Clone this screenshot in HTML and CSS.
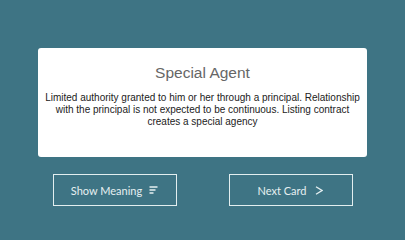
FILE: index.html
```html
<!DOCTYPE html>
<html>
<head>
<meta charset="utf-8">
<link rel="stylesheet" href="styles.css">
</head>
<body>
<div class="page">
  <div class="card">
    <h1 class="title">Special Agent</h1>
    <p class="meaning">Limited authority granted to him or her through a principal. Relationship with the principal is not expected to be continuous. Listing contract creates a special agency</p>
  </div>
  <div class="actions">
    <button class="btn btn-meaning">Show Meaning
      <svg class="icon" width="9" height="8" viewBox="0 0 9 8"><path d="M0.5 1h8M0.5 4h6M0.5 7h4" stroke="#e6f0f1" stroke-width="1.3" fill="none"/></svg>
    </button>
    <button class="btn btn-next">Next Card
      <svg class="icon" width="8" height="9" viewBox="0 0 8 9"><path d="M1 0.8L7 4.5L1 8.2" stroke="#e6f0f1" stroke-width="1.3" fill="none"/></svg>
    </button>
  </div>
</div>
</body>
</html>
```
FILE: styles.css
```css
html, body {
  margin: 0;
  padding: 0;
  background: #3e7484;
}
.page {
  width: 405px;
  height: 228px;
  box-sizing: border-box;
  padding-top: 48px;
  display: flex;
  flex-direction: column;
  align-items: center;
}
.card {
  width: 329px;
  height: 109px;
  box-sizing: border-box;
  background: #ffffff;
  border-radius: 3px;
  padding: 16px 2px 0;
  text-align: center;
}
.title {
  margin: 0;
  font-family: "Liberation Sans", Arial, sans-serif;
  font-weight: normal;
  font-size: 15.5px;
  line-height: 18px;
  color: #666666;
}
.meaning {
  margin: 10px 0 0;
  font-family: "Liberation Sans", Arial, sans-serif;
  font-size: 10px;
  line-height: 12px;
  color: #222222;
}
.actions {
  margin-top: 17px;
  width: 300px;
  display: flex;
  justify-content: space-between;
}
.btn {
  width: 124px;
  height: 32px;
  box-sizing: border-box;
  background: transparent;
  border: 1.5px solid #e2eeef;
  color: #e6f0f1;
  font-family: Lato, sans-serif;
  font-size: 11px;
  display: flex;
  align-items: center;
  justify-content: center;
  padding: 0;
}
.btn-meaning {
  gap: 7px;
}
.btn-next {
  gap: 9px;
}
.icon {
  display: block;
}
```
